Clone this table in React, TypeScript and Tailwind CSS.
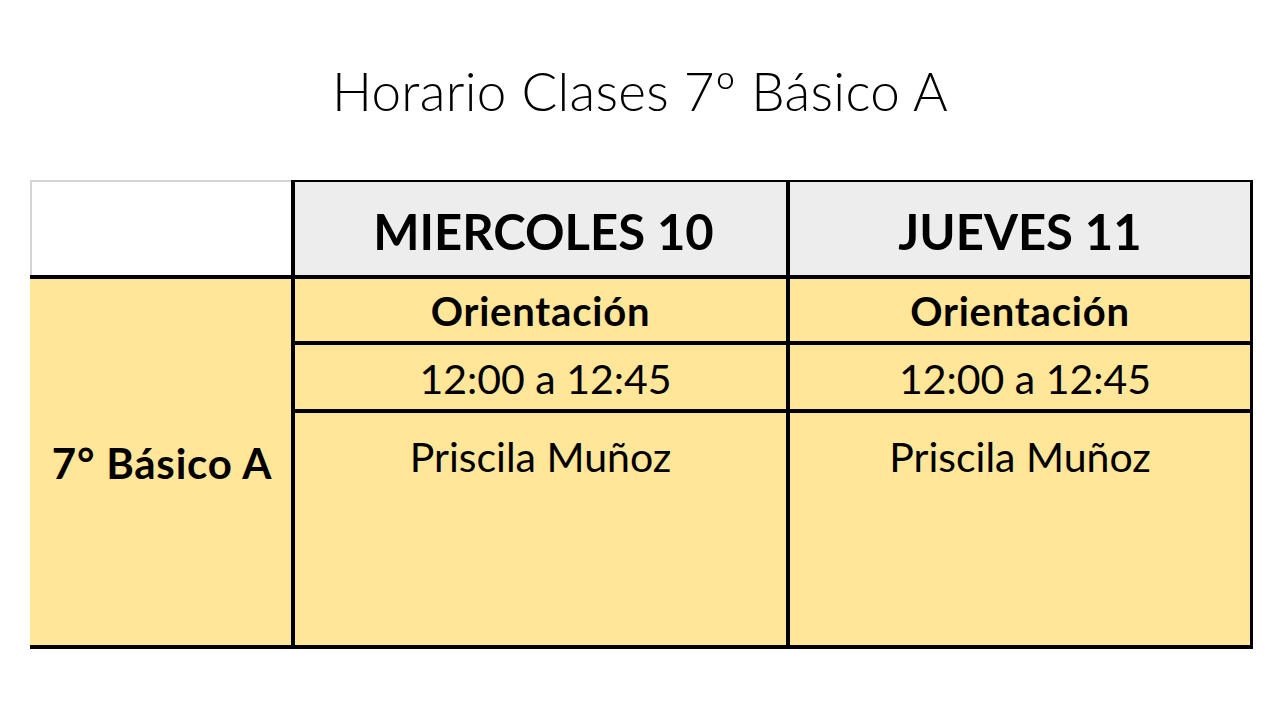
export default function App() {
  return (
    <div
      className="w-[1280px] h-[720px] bg-white text-black"
      style={{ fontFamily: "Lato, 'Open Sans', sans-serif" }}
    >
      <h1 className="pt-[60px] h-[180px] text-center text-[53px] font-light leading-[62px] tracking-[0.3px]">
        Horario Clases 7º Básico A
      </h1>

      {/* Schedule table: black background shows through the gaps as cell borders */}
      <div className="ml-[30px] w-[1223px] bg-black pt-[2px] pr-[3px] pb-[4px] grid grid-cols-[261px_491px_460px] grid-rows-[93px_62px_64px_232px] gap-[4px]">
        <div className="-mt-[2px] bg-white border-t-2 border-l-2 border-[#d4d4d4]"></div>
        <div className="bg-[#ededed] flex items-center justify-center pt-[6px] pl-[6px] text-[49px] font-bold">
          MIERCOLES 10
        </div>
        <div className="bg-[#ededed] flex items-center justify-center pt-[6px] text-[49px] font-bold">
          JUEVES 11
        </div>

        <div className="row-span-3 bg-[#ffe699] flex items-center justify-center pt-[2px] pl-[3px] text-[42px] font-bold tracking-[0.8px]">
          7° Básico A
        </div>
        <div className="bg-[#ffe699] flex items-center justify-center pt-[2px] text-[40px] font-bold tracking-[0.8px]">
          Orientación
        </div>
        <div className="bg-[#ffe699] flex items-center justify-center pt-[2px] text-[40px] font-bold tracking-[0.8px]">
          Orientación
        </div>

        <div className="bg-[#ffe699] flex items-center justify-center pt-[4px] pl-[10px] text-[41px]">
          12:00 a 12:45
        </div>
        <div className="bg-[#ffe699] flex items-center justify-center pt-[4px] pl-[10px] text-[41px]">
          12:00 a 12:45
        </div>

        <div className="bg-[#ffe699] flex justify-center pt-[20px] text-[41px] leading-[48px]">
          Priscila Muñoz
        </div>
        <div className="bg-[#ffe699] flex justify-center pt-[20px] text-[41px] leading-[48px]">
          Priscila Muñoz
        </div>
      </div>
    </div>
  );
}
